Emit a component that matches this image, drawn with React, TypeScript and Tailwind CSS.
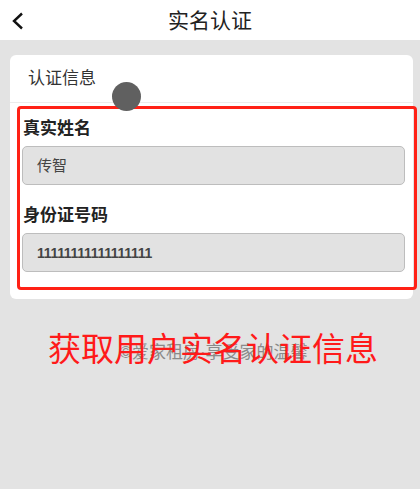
const cjk = "font-['Liberation_Sans','Noto_Sans_CJK_SC',sans-serif]";

function Field({ label, value, mono }: { label: string; value: string; mono?: boolean }) {
  return (
    <div>
      <p className="pl-[1px] text-[17px] font-bold leading-[24px] text-[#222]">{label}</p>
      <div className="mt-[5px] flex h-[39px] items-center rounded-[5px] border border-[#bdbdbd] bg-[#e2e2e2] pl-[14px]">
        <span
          className={`leading-none text-[#444] ${
            mono ? "text-[14px] font-semibold tracking-[-0.3px]" : "text-[15px]"
          }`}
        >
          {value}
        </span>
      </div>
    </div>
  );
}

export default function App() {
  return (
    <div className={`h-[489px] w-[420px] overflow-hidden bg-[#e3e3e3] ${cjk}`}>
      <header className="relative flex h-[40px] items-center justify-center bg-white">
        <svg
          className="absolute left-[11px] top-[12px]"
          width="14"
          height="18"
          viewBox="0 0 14 18"
          fill="none"
          stroke="#111"
          strokeWidth="2.4"
        >
          <path d="M11 1.5 3 9l8 7.5" />
        </svg>
        <h1 className="text-[21px] leading-none text-[#222]">实名认证</h1>
      </header>

      <main className="pl-[10px] pr-[7px] pt-[15px]">
        <section className="relative rounded-[6px] bg-white pb-[9px]">
          <div className="flex h-[48px] items-center border-b border-[#ececec] pl-[18px]">
            <h2 className="text-[17px] leading-none text-[#333]">认证信息</h2>
          </div>
          <span className="absolute left-[102px] top-[27px] h-[29px] w-[29px] rounded-full bg-[#606060]" />

          <div className="ml-[7px] mr-[-4px] mt-[3px] rounded-[4px] border-[3px] border-[#ff2116] pb-[15px] pl-[2px] pr-[9px] pt-[8px]">
            <Field label="真实姓名" value="传智" />
            <div className="mt-[19px]">
              <Field label="身份证号码" value="11111111111111111" mono />
            </div>
          </div>
        </section>

        <div className="relative mt-[41px] flex h-[24px] items-center justify-center">
          <p className="pl-[4px] text-[17px] leading-none text-[#8a8a8a]">©爱家租房·享受家的温馨</p>
          <p className="absolute inset-x-0 top-[-7px] pl-[3px] text-center text-[33px] leading-none text-[#ff1a1a]">
            获取用户实名认证信息
          </p>
        </div>
      </main>
    </div>
  );
}
